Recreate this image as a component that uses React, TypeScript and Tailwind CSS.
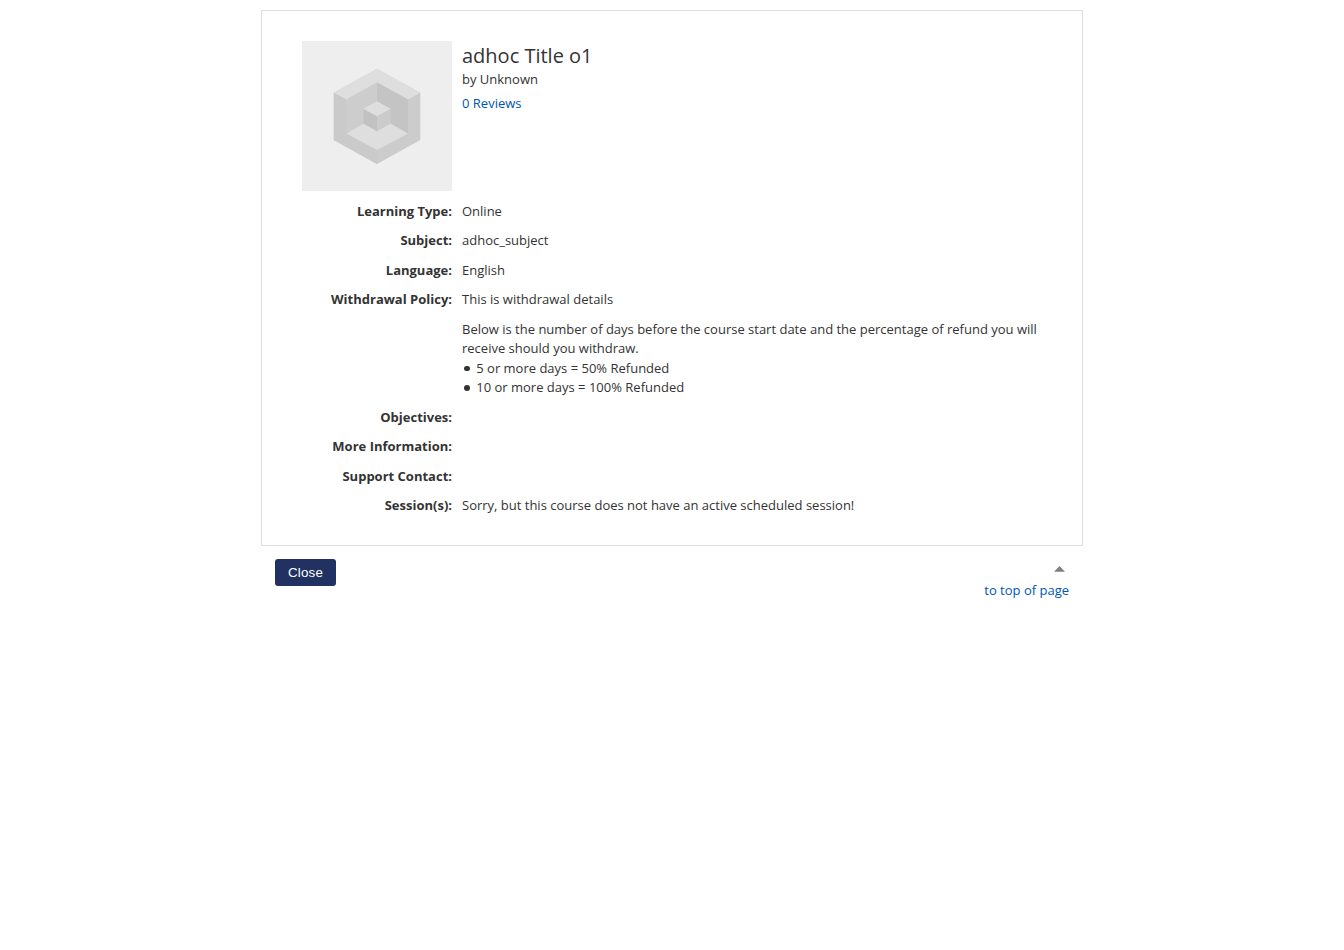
import React from "react";

type Detail = { label: string; content?: React.ReactNode };

const details: Detail[] = [
  { label: "Learning Type:", content: "Online" },
  { label: "Subject:", content: "adhoc_subject" },
  { label: "Language:", content: "English" },
  {
    label: "Withdrawal Policy:",
    content: (
      <>
        <p>This is withdrawal details</p>
        <p className="mt-[10px]">
          Below is the number of days before the course start date and the percentage of refund you will receive should you withdraw.
        </p>
        <ul>
          <PolicyItem text="5 or more days = 50% Refunded" />
          <PolicyItem text="10 or more days = 100% Refunded" />
        </ul>
      </>
    ),
  },
  { label: "Objectives:" },
  { label: "More Information:" },
  { label: "Support Contact:" },
  { label: "Session(s):", content: "Sorry, but this course does not have an active scheduled session!" },
];

function PolicyItem({ text }: { text: string }) {
  return (
    <li className="flex items-center">
      <span className="ml-[2.25px] mr-[6.5px] size-[5.5px] rounded-full bg-[#333333]" />
      {text}
    </li>
  );
}

function CourseThumbnail() {
  return (
    <svg className="block size-[150px] shrink-0 bg-[#eeeeee]" viewBox="0 0 150 150" aria-hidden="true">
      <path d="M75 27.7 118.3 51.8V98.9L75 123 31.8 98.9V51.8Z" fill="#cccccc" />
      <path d="M75 27.7 118.3 51.8 106.1 58.6 75 41.5 44.4 58.6 31.8 51.8Z" fill="#dedede" />
      <path d="M31.8 51.8 44.4 58.6V92.5L75 109V123L31.8 98.9Z" fill="#cacaca" />
      <path d="M75 41.5 44.4 58.6V92.5L75 76Z" fill="#cdcdcd" />
      <path d="M75 41.5 106.1 58.6V92.5L75 76Z" fill="#c4c4c4" />
      <path d="M75 75 106.1 92.5 75 109 44.4 92.5Z" fill="#dedede" />
      <path d="M61.5 67.8 75 75.2V90.2L61.5 82.8Z" fill="#c2c2c2" />
      <path d="M88.5 67.8 75 75.2V90.2L88.5 82.8Z" fill="#cbcbcb" />
      <path d="M75 60.3 88.5 67.8 75 75.2 61.5 67.8Z" fill="#dedede" />
    </svg>
  );
}

export default function App() {
  return (
    <div className="min-h-screen bg-white pt-[10px] font-['Open_Sans',sans-serif] text-[13px] leading-[19.5px] text-[#333333]">
      <main className="mx-auto w-[822px]">
        <section className="h-[536px] border border-[#dddddd] px-[40px] pt-[30px]">
          <header className="flex gap-[10px]">
            <CourseThumbnail />
            <div>
              <h1 className="text-[20px] leading-[29px]">adhoc Title o1</h1>
              <p>by Unknown</p>
              <a href="#reviews" className="mt-[4px] block text-[#0056b3]">0 Reviews</a>
            </div>
          </header>
          <dl className="mt-[10.5px] flex flex-col gap-[10px]">
            {details.map((detail) => (
              <div key={detail.label} className="flex min-h-[19.5px] gap-[10px]">
                <dt className="w-[150px] shrink-0 text-right font-bold">{detail.label}</dt>
                <dd className="w-[580px]">{detail.content}</dd>
              </div>
            ))}
          </dl>
        </section>
        <footer className="flex items-start justify-between px-[14px] pt-[13px]">
          <button className="h-[27px] w-[61px] rounded-[3px] bg-[#213262] font-['Liberation_Sans',Arial,sans-serif] text-[13.333px] leading-[27px] tracking-[0.2px] text-white">
            Close
          </button>
          <a href="#top" className="flex flex-col items-end text-[#0056b3]">
            <svg className="mr-[4px] mt-[7px] h-[6px] w-[12px]" viewBox="0 0 12 6" aria-hidden="true">
              <path d="M6.5 0 12 5.8H1Z" fill="#808080" />
            </svg>
            <span className="mt-[9px]">to top of page</span>
          </a>
        </footer>
      </main>
    </div>
  );
}
